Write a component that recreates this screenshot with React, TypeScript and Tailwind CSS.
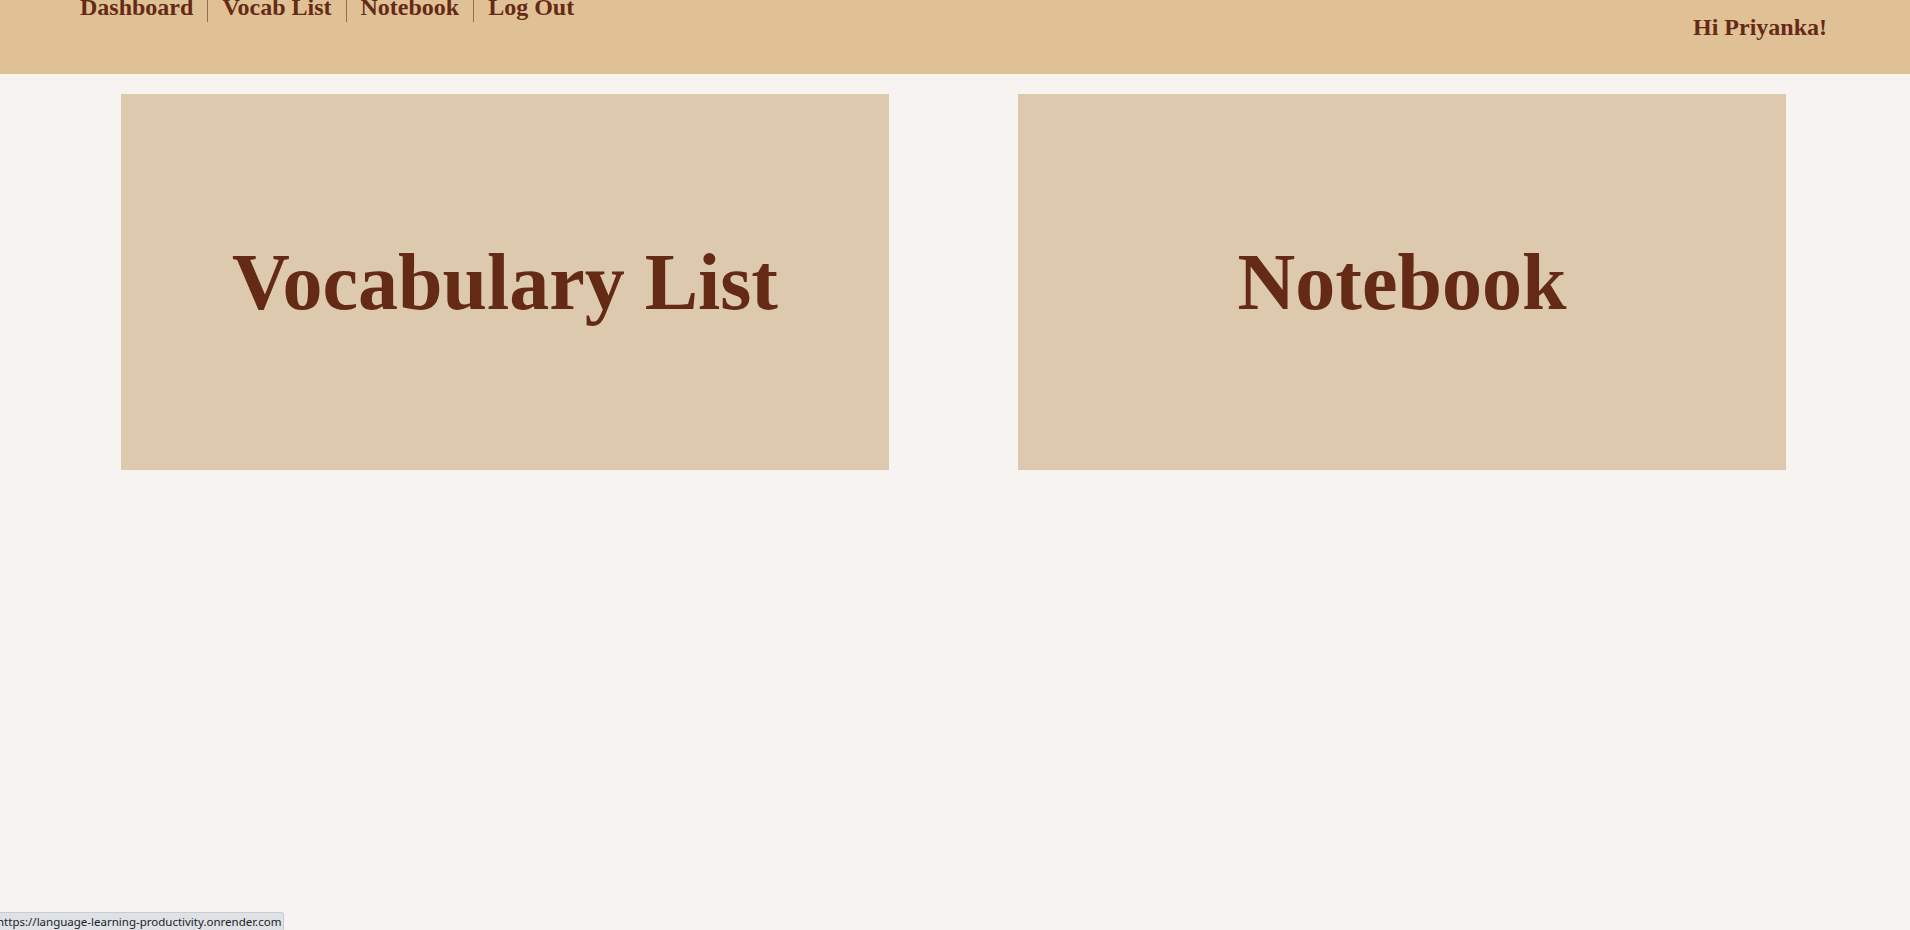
import React from "react";

const links = ["Dashboard", "Vocab List", "Notebook", "Log Out"];

export default function App() {
    return (
        <div
            className="min-h-[930px] bg-[#f7f3f0] text-[#652a15] relative overflow-hidden"
            style={{ fontFamily: '"Liberation Serif", "Times New Roman", serif' }}
        >
            {/* header */}
            <header className="h-[74px] bg-[#e0c196] flex justify-between items-start">
                <nav className="flex -mt-[6px] pl-[80px] text-[24px] font-bold leading-[1.15]">
                    {links.map((l, i) => (
                        <a
                            key={l}
                            href="#"
                            className={
                                i === 0
                                    ? "pr-[14px]"
                                    : "px-[14px] border-l border-[#957050]"
                            }
                        >
                            {l}
                        </a>
                    ))}
                </nav>
                <p className="mt-[14px] pr-[83px] text-[24px] font-bold leading-[1.15]">
                    Hi Priyanka!
                </p>
            </header>

            {/* cards */}
            <main className="flex pl-[121px] gap-[129px] pt-[20px]">
                <a
                    href="#"
                    className="w-[768px] h-[376px] bg-[#dcc9ae] flex items-center justify-center text-[80px] font-bold leading-none"
                >
                    Vocabulary List
                </a>
                <a
                    href="#"
                    className="w-[768px] h-[376px] bg-[#dcc9ae] flex items-center justify-center text-[80px] font-bold leading-none"
                >
                    Notebook
                </a>
            </main>

            {/* link preview bubble */}
            <div
                className="absolute left-0 bottom-0 w-[284px] h-[18px] bg-[#dee1e6] border-t border-r border-[#c8cbd0] rounded-tr-[3px] text-[11.5px] text-[#202124] leading-[17px] whitespace-nowrap overflow-hidden"
                style={{ fontFamily: '"Noto Sans", "Liberation Sans", sans-serif' }}
            >
                <span className="block -ml-[3px]">https://language-learning-productivity.onrender.com</span>
            </div>
        </div>
    );
}
